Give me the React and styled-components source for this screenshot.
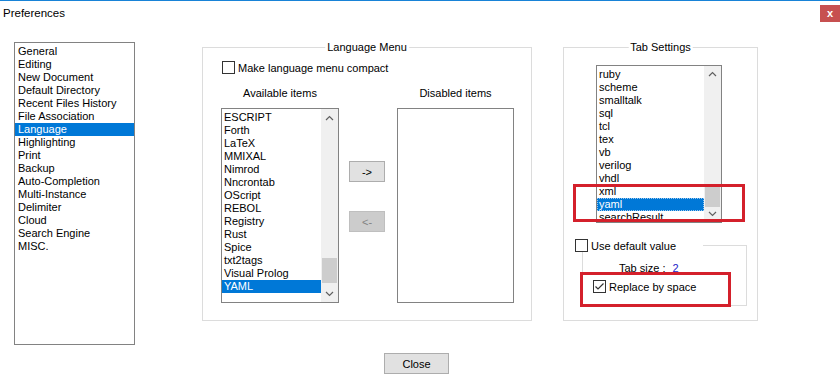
import React from 'react'
import styled, { createGlobalStyle } from 'styled-components'

const GlobalStyle = createGlobalStyle`
  html, body {
    margin: 0;
    padding: 0;
    background: #fff;
  }
  body {
    font-family: "Liberation Sans", Arial, sans-serif;
    color: #000;
  }
`

const Window = styled.div`
  width: 840px;
  height: 384px;
  box-sizing: border-box;
  border-top: 1px solid #1883d7;
  background: #fff;
  overflow: hidden;
`
const TitleBar = styled.div`
  display: flex;
  justify-content: space-between;
  align-items: flex-start;
  height: 39px;
`
const Title = styled.div`
  margin: 5px 0 0 3px;
  font-size: 11.5px;
  line-height: 14px;
`
const CloseX = styled.div`
  margin-top: 4px;
  width: 20px;
  height: 17px;
  background: #c75050;
  color: #fff;
  font-size: 11px;
  font-weight: bold;
  display: flex;
  align-items: center;
  justify-content: center;
  padding-bottom: 2px;
  box-sizing: border-box;
`
const Main = styled.div`
  display: flex;
  align-items: flex-start;
  padding-left: 14px;
`
const ListBox = styled.div`
  display: flex;
  box-sizing: border-box;
  width: ${p => p.$w}px;
  height: ${p => p.$h}px;
  margin: ${p => p.$m || 0};
  border: 1px solid #828282;
  background: #fff;
  overflow: hidden;
`
const Items = styled.div`
  flex: 1;
  padding-top: ${p => p.$top || 1}px;
  overflow: hidden;
`
const Item = styled.div`
  height: 13px;
  line-height: 13px;
  font-size: 11px;
  padding-left: ${p => p.$indent || 2}px;
  white-space: nowrap;
  background: ${p => (p.$selected ? '#0078d7' : 'transparent')};
  color: ${p => (p.$selected ? '#fff' : '#000')};
  outline: ${p => (p.$focus ? '1px dotted #9cc8ee' : 'none')};
  outline-offset: -1px;
`
const ScrollBar = styled.div`
  width: 17px;
  background: #f0f0f0;
  display: flex;
  flex-direction: column;
`
const Arrow = styled.div`
  height: 17px;
  display: flex;
  align-items: center;
  justify-content: center;
`
const Track = styled.div`
  flex: 1;
`
const Thumb = styled.div`
  margin: ${p => p.$top}px 1px 0;
  height: ${p => p.$h}px;
  background: #cdcdcd;
`
const Group = styled.div`
  position: relative;
  box-sizing: border-box;
  width: ${p => p.$w}px;
  height: 274px;
  margin: 7px 0 0 ${p => p.$left}px;
  border: 1px solid #dcdcdc;
`
const Caption = styled.div`
  position: absolute;
  top: -8px;
  left: 50%;
  transform: translateX(-50%);
  padding: 0 2px;
  background: #fff;
  font-size: 11px;
  line-height: 14px;
  white-space: nowrap;
`
const CheckRow = styled.label`
  display: flex;
  align-items: center;
  height: 13px;
  margin: ${p => p.$m || 0};
  font-size: 11px;
  white-space: nowrap;
`
const Box = styled.span`
  width: 13px;
  height: 13px;
  box-sizing: border-box;
  border: 1px solid #333;
  background: #fff;
  margin-right: 3px;
  display: flex;
  flex-shrink: 0;
`
const Columns = styled.div`
  display: flex;
  align-items: flex-start;
  margin-top: 12px;
  padding-left: 18px;
`
const Column = styled.div`
  display: flex;
  flex-direction: column;
  align-items: center;
  margin-left: ${p => p.$left || 0}px;
`
const ColumnLabel = styled.div`
  height: 15px;
  line-height: 15px;
  font-size: 11px;
  margin-bottom: 7px;
`
const MoveButtons = styled.div`
  display: flex;
  flex-direction: column;
  gap: 29px;
  margin: 75px 0 0 10px;
`
const Button = styled.button`
  box-sizing: border-box;
  width: ${p => p.$w}px;
  height: 21px;
  padding: 0;
  border: 1px solid ${p => (p.disabled ? '#bfbfbf' : '#adadad')};
  background: ${p => (p.disabled ? '#cccccc' : '#e1e1e1')};
  color: ${p => (p.disabled ? '#838383' : '#000')};
  font-family: inherit;
  font-size: 11px;
`
const Annotation = styled.div`
  position: absolute;
  left: ${p => p.$x}px;
  top: ${p => p.$y}px;
  width: ${p => p.$w}px;
  height: ${p => p.$h}px;
  box-sizing: border-box;
  border: 3px solid #d4202b;
  pointer-events: none;
`
const SubGroup = styled.div`
  position: relative;
  box-sizing: border-box;
  width: 165px;
  height: 61px;
  margin: 22px 0 0 18px;
  border: 1px solid #dcdcdc;
`
const SubCaption = styled.div`
  position: absolute;
  top: -7px;
  left: -8px;
  width: 128px;
  background: #fff;
`
const TabSize = styled.div`
  display: flex;
  margin: 15px 0 0 36px;
  height: 14px;
  line-height: 14px;
  font-size: 11px;
`
const Value = styled.span`
  margin-left: 7px;
  color: #2323c8;
`
const Footer = styled.div`
  display: flex;
  padding: 8px 0 0 384px;
`

const categories = [
  'General', 'Editing', 'New Document', 'Default Directory', 'Recent Files History',
  'File Association', 'Language', 'Highlighting', 'Print', 'Backup', 'Auto-Completion',
  'Multi-Instance', 'Delimiter', 'Cloud', 'Search Engine', 'MISC.',
]
const available = [
  'ESCRIPT', 'Forth', 'LaTeX', 'MMIXAL', 'Nimrod', 'Nncrontab', 'OScript', 'REBOL',
  'Registry', 'Rust', 'Spice', 'txt2tags', 'Visual Prolog', 'YAML',
]
const tabLangs = [
  'ruby', 'scheme', 'smalltalk', 'sql', 'tcl', 'tex', 'vb', 'verilog', 'vhdl', 'xml',
  'yaml', 'searchResult',
]

const Chevron = ({ up }) => (
  <svg width="9" height="6" viewBox="0 0 9 6">
    <polyline
      points={up ? '1,5 4.5,1.5 8,5' : '1,1 4.5,4.5 8,1'}
      fill="none"
      stroke="#606060"
      strokeWidth="1.2"
    />
  </svg>
)

const Scroll = ({ top, h }) => (
  <ScrollBar>
    <Arrow><Chevron up /></Arrow>
    <Track><Thumb $top={top} $h={h} /></Track>
    <Arrow><Chevron /></Arrow>
  </ScrollBar>
)

const CheckBox = ({ checked, children, m }) => (
  <CheckRow $m={m}>
    <Box>
      {checked && (
        <svg width="11" height="11" viewBox="0 0 11 11">
          <polyline points="1.5,5.5 4,8 9.5,2.5" fill="none" stroke="#333" strokeWidth="1.2" />
        </svg>
      )}
    </Box>
    {children}
  </CheckRow>
)

export default function App() {
  return (
    <>
      <GlobalStyle />
      <Window>
        <TitleBar>
          <Title>Preferences</Title>
          <CloseX>x</CloseX>
        </TitleBar>
        <Main>
          <ListBox $w={121} $h={303} $m="2px 0 0 0">
            <Items $top={2}>
              {categories.map(c => (
                <Item key={c} $indent={3} $selected={c === 'Language'}>{c}</Item>
              ))}
            </Items>
          </ListBox>

          <Group $w={330} $left={67}>
            <Caption>Language Menu</Caption>
            <CheckBox m="13px 0 0 19px">Make language menu compact</CheckBox>
            <Columns>
              <Column>
                <ColumnLabel>Available items</ColumnLabel>
                <ListBox $w={118} $h={195}>
                  <Items $top={2}>
                    {available.map(a => (
                      <Item key={a} $selected={a === 'YAML'}>{a}</Item>
                    ))}
                  </Items>
                  <Scroll top={132} h={25} />
                </ListBox>
              </Column>
              <MoveButtons>
                <Button $w={36}>-&gt;</Button>
                <Button $w={36} disabled>&lt;-</Button>
              </MoveButtons>
              <Column $left={12}>
                <ColumnLabel>Disabled items</ColumnLabel>
                <ListBox $w={117} $h={195} />
              </Column>
            </Columns>
          </Group>

          <Group $w={195} $left={31}>
            <Caption>Tab Settings</Caption>
            <ListBox $w={126} $h={158} $m="17px 0 0 32px">
              <Items $top={2}>
                {tabLangs.map(t => (
                  <Item key={t} $selected={t === 'yaml'} $focus={t === 'yaml'}>{t}</Item>
                ))}
              </Items>
              <Scroll top={104} h={21} />
            </ListBox>
            <SubGroup>
              <SubCaption>
                <CheckBox>Use default value</CheckBox>
              </SubCaption>
              <TabSize>Tab size :<Value>2</Value></TabSize>
              <CheckBox checked m="5px 0 0 10px">Replace by space</CheckBox>
            </SubGroup>
            <Annotation $x={9} $y={136} $w={172} $h={38} />
            <Annotation $x={16} $y={224} $w={151} $h={35} />
          </Group>
        </Main>
        <Footer>
          <Button $w={65}>Close</Button>
        </Footer>
      </Window>
    </>
  )
}
